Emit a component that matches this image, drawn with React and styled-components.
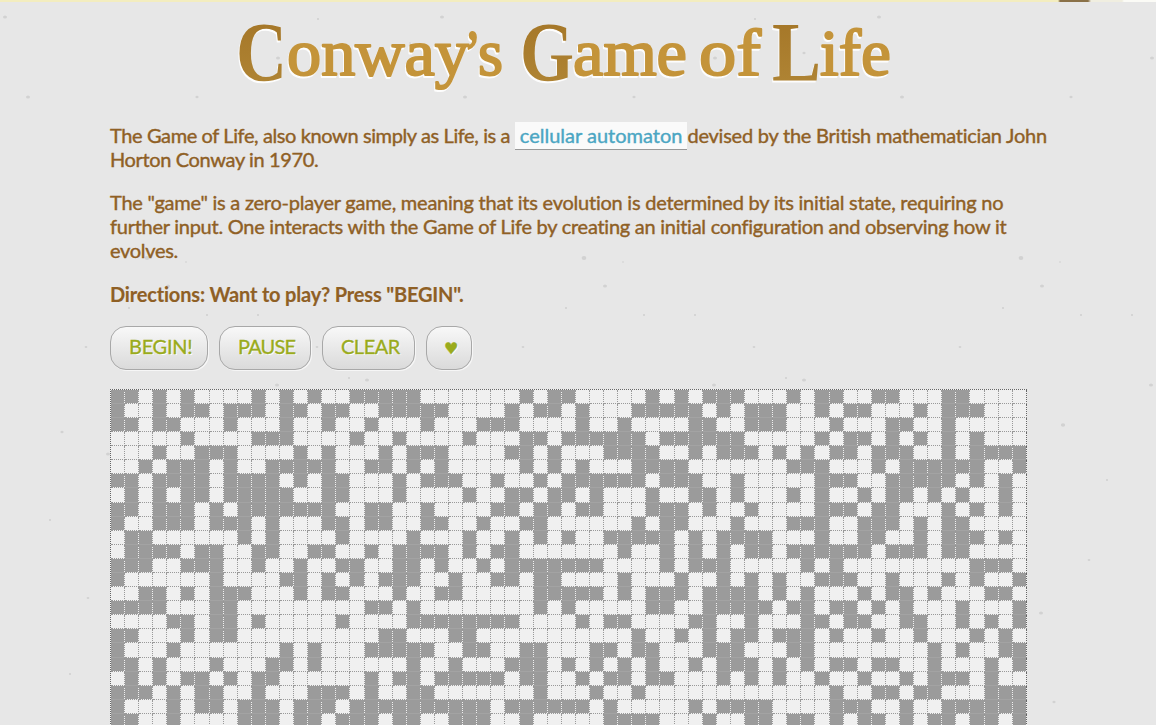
import React from "react";
import styled, { createGlobalStyle } from "styled-components";

const GlobalStyle = createGlobalStyle`
  html, body { margin: 0; padding: 0; height: 725px; overflow: hidden; }
  body { background: #e7e7e7; }
`;

const Page = styled.div`
  position: relative;
  width: 1156px;
  height: 725px;
  overflow: hidden;
  font-family: Lato, "Liberation Sans", sans-serif;
  font-size: 20px;
  line-height: 24px;
  color: #8f6025;
`;

const TopStrip = styled.div`
  position: relative;
  height: 2px;
  background: linear-gradient(
    90deg,
    #f3edbf 0 1058px,
    #8a7148 1060px 1088px,
    #f0eee0 1091px 1122px,
    #fbfbf6 1124px
  );
`;

const Paper = styled.svg`
  position: absolute;
  inset: 0;
`;

const Content = styled.main`
  position: relative;
  width: 950px;
  margin-left: 110px;
`;

const Logo = styled.svg`
  display: block;
  width: 700px;
  height: 92px;
  margin-left: 100px;
  overflow: visible;
  font-family: "Liberation Serif", serif;
  filter: drop-shadow(-1px 2px 0.5px #fdfdfd);
`;

const Intro = styled.div`
  padding-top: 29px;
`;

const Paragraph = styled.p`
  margin: 0 0 ${(p) => p.$after}px;
  white-space: nowrap;
  -webkit-text-stroke: 0.4px currentColor;
`;

const Directions = styled(Paragraph)`
  font-weight: 700;
  letter-spacing: -0.18px;
  -webkit-text-stroke: 0.15px currentColor;
`;

const Line = styled.span`
  letter-spacing: ${(p) => p.$track}px;
`;

const Link = styled.a`
  padding: 1px 5px 2px;
  color: #4ba6c3;
  background: #fafafa;
  border-bottom: 1px solid #999;
`;

const Buttons = styled.div`
  display: flex;
  gap: 11px;
  margin-bottom: 19px;
`;

const Button = styled.button`
  box-sizing: border-box;
  width: ${(p) => p.$width}px;
  height: 44px;
  padding: 0 0 4px 18px;
  border: 1px solid #a8a8a8;
  border-radius: 16px;
  background: linear-gradient(#f8f8f8, #dadada);
  box-shadow: 1px 1px 0 #f6f6f6;
  font: inherit;
  letter-spacing: ${(p) => p.$track || 0}px;
  text-align: left;
  color: #9aab1c;
  text-shadow: 1px 1px 0 #fff;
  -webkit-text-stroke: 0.35px currentColor;
`;

const Heart = styled.span`
  display: inline-block;
  font-family: "DejaVu Sans", sans-serif;
  font-size: 16px;
  line-height: 20px;
  margin-left: -1px;
`;

const Board = styled.div`
  width: 916px;
  border-top: 1px dotted #666;
  border-left: 1px dotted #666;
  background: #f0f0f0;
`;

const Row = styled.div`
  display: flex;
  height: ${(p) => (p.$tall ? 15 : 14)}px;
`;

const Cell = styled.span`
  box-sizing: border-box;
  flex: 0 0 ${(p) => (p.$wide ? 15 : 14)}px;
  border-right: 1px dotted #999;
  border-bottom: 1px ${(p) => (p.$joined ? "solid #a3a3a3" : "dotted #999")};
  background: ${(p) => (p.$alive ? "#9b9b9b" : "#f0f0f0")};
  background-clip: padding-box;
  &:last-child { border-right-color: #666; }
`;

const ROWS = [
  "1101010000101010" + "0111110000000101" + "10000010101110001" + "0110011000110000",
  "1001011011101101" + "1001111100001011" + "01000111110101110" + "0101100010111000",
  "1101100010001001" + "0010001000111000" + "01001000011001110" + "0010001100100000",
  "0000010000111000" + "0100100001000110" + "11111101111110000" + "0101101010101000",
  "0001001110000101" + "0001011100001101" + "00011110010111010" + "1011011100101111",
  "0010111010011111" + "0011010100000101" + "01000111100000001" + "1100010111111001",
  "1101111011110101" + "1000101110010010" + "11111101110010000" + "0111001111101010",
  "0101011011111001" + "1000100001001101" + "10100010011010001" + "0100101101010010",
  "1101110101111111" + "0011001000011011" + "01100011101001000" + "0111011000101010",
  "1001110111010001" + "1011001100100110" + "00000101100010001" + "1100111010110000",
  "0110000001010000" + "1000010001001010" + "10011111010111100" + "0100110010111010",
  "0111101100110011" + "0010111101011000" + "00001001010101101" + "1111101110110000",
  "1110011100100100" + "1100110100101111" + "11100001011100000" + "1010000000001110",
  "1000000100001101" + "0101110010011011" + "00001000100101010" + "0111001000101001",
  "0011010111000101" + "1000100110000011" + "11101011101111010" + "1000101101000110",
  "1111000110000000" + "0011010000000010" + "10000011001111101" + "1011010100010001",
  "0000110110100000" + "1000011111111000" + "01011000011001000" + "1101100110010101",
  "1100010110000000" + "0001100011000000" + "00000100101011011" + "1010010010001010",
  "1000100000001010" + "0011111001100110" + "00110110001110001" + "1000000001010011",
  "1101000100011010" + "0000010010001110" + "10101010010111010" + "1011011001000101",
  "0101011010110000" + "0010110111110110" + "01011011000101010" + "0100100101110100",
  "1110101100100011" + "1010011000000010" + "00100100000000000" + "0010011011000111",
  "1000101101110111" + "0111111111101111" + "11010000010111100" + "0011100100111111",
  "1100100001110110" + "1110110011100100" + "00011110001001101" + "1010110101101101",
];

const SPECKS = [
  [5, 17, 2], [318, 19, 1.2], [410, 43, 1], [278, 58, 2], [367, 53, 1.6],
  [28, 97, 2], [197, 97, 1.6], [312, 62, 1], [147, 258, 2.4], [186, 262, 1],
  [168, 286, 2], [129, 308, 1.2], [207, 315, 1.2], [258, 315, 1.2],
  [317, 347, 1.4], [86, 347, 1.4], [349, 378, 1.2], [277, 385, 2],
  [367, 380, 2], [189, 425, 2.2], [62, 432, 1.6], [108, 454, 2],
  [88, 598, 1.4], [167, 613, 2], [50, 520, 1.2], [215, 560, 1.4],
  [233, 480, 1.2], [70, 674, 1.2], [180, 702, 1.6],
];

const WORDS = [
  { t: "C", x: 236, w: 51, big: true },
  { t: "onway", x: 287, w: 182 },
  { t: "’", x: 464, w: 17 },
  { t: "s", x: 478, w: 25 },
  { t: "G", x: 520, w: 54, big: true },
  { t: "ame", x: 573, w: 114 },
  { t: "of", x: 699, w: 62 },
  { t: "L", x: 772, w: 49, big: true },
  { t: "ife", x: 820, w: 71 },
];

export default function App() {
  return (
    <>
      <GlobalStyle />
      <Page>
        <Paper width="1156" height="725">
          <defs>
            <pattern id="paper" width="437" height="725" patternUnits="userSpaceOnUse">
              {SPECKS.map(([x, y, r]) => (
                <ellipse key={`${x}-${y}`} cx={x} cy={y} rx={r} ry={r * 0.8} fill="#d2d2d2" />
              ))}
            </pattern>
          </defs>
          <rect width="1156" height="725" fill="url(#paper)" />
        </Paper>
        <TopStrip />
        <Content>
          <Logo viewBox="210 2 700 92" role="img" aria-label="Conway’s Game of Life">
            <defs>
              <linearGradient id="cap" x1="0" y1="0" x2="0" y2="1">
                <stop offset="0.2" stopColor="#a67829" />
                <stop offset="0.9" stopColor="#b08535" />
              </linearGradient>
            </defs>
            {WORDS.map(({ t, x, w, big }) => (
              <text
                key={t}
                x={x}
                y={big ? 81 : 75}
                fontSize={big ? 84 : 66}
                fontWeight={big ? 700 : 400}
                textLength={w}
                lengthAdjust="spacingAndGlyphs"
                fill={big ? "url(#cap)" : "#c4943a"}
                stroke={big ? "none" : "#c4943a"}
                strokeWidth={big ? 0 : 2}
                strokeLinejoin="round"
              >
                {t}
              </text>
            ))}
          </Logo>
          <Intro>
            <Paragraph $after={19}>
              <Line $track={-0.39}>The Game of Life, also known simply as Life, is a </Line>
              <Link>cellular automaton</Link>
              <Line $track={-0.23}>devised by the British mathematician John</Line>
              <br />
              <Line $track={-0.36}>Horton Conway in 1970.</Line>
            </Paragraph>
            <Paragraph $after={20}>
              <Line $track={-0.24}>
                The "game" is a zero-player game, meaning that its evolution is determined by its initial state, requiring no
              </Line>
              <br />
              <Line $track={-0.26}>
                further input. One interacts with the Game of Life by creating an initial configuration and observing how it
              </Line>
              <br />
              <Line $track={-0.3}>evolves.</Line>
            </Paragraph>
            <Directions $after={20}>Directions: Want to play? Press "BEGIN".</Directions>
          </Intro>
          <Buttons>
            <Button $width={98} $track={-0.3}>BEGIN!</Button>
            <Button $width={92} $track={-0.8}>PAUSE</Button>
            <Button $width={93} $track={-0.5}>CLEAR</Button>
            <Button $width={46}><Heart>♥</Heart></Button>
          </Buttons>
          <Board>
            {ROWS.map((row, r) => (
              <Row key={r} $tall={r % 11 === 7}>
                {row.split("").map((c, i) => (
                  <Cell
                    key={i}
                    $alive={c === "1"}
                    $joined={c === "1" && ROWS[r + 1]?.[i] === "1"}
                    $wide={i % 11 === 6}
                  />
                ))}
              </Row>
            ))}
          </Board>
        </Content>
      </Page>
    </>
  );
}
